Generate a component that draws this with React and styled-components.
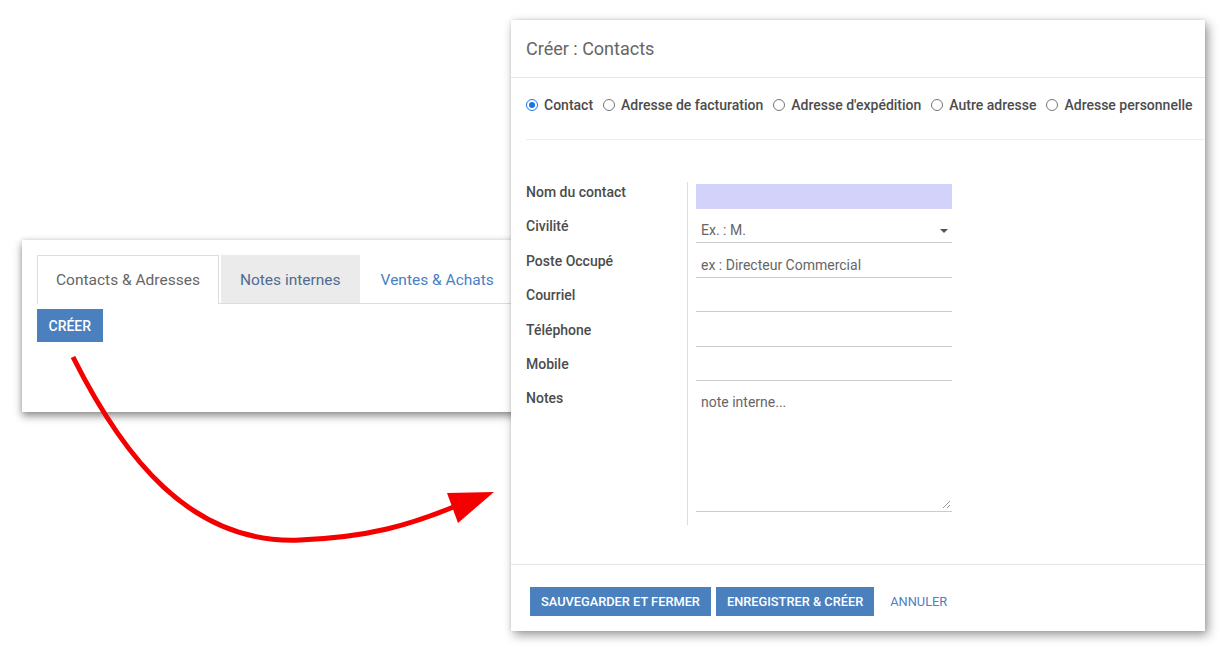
import React from 'react';
import styled, { createGlobalStyle } from 'styled-components';

const GlobalStyle = createGlobalStyle`
  html, body {
    margin: 0;
    padding: 0;
    background: #ffffff;
    font-family: Roboto, "Liberation Sans", Arial, sans-serif;
  }
`;

const blue = '#4a80be';
const labelColor = '#4c4c4c';

const Stage = styled.div`
  position: relative;
  width: 1226px;
  height: 658px;
  overflow: hidden;
  background: #fff;
`;

/* ---------- back window ---------- */

const BackWindow = styled.div`
  position: absolute;
  left: 22px;
  top: 240px;
  width: 600px;
  height: 172px;
  background: #fff;
  box-shadow: 0 4px 8px rgba(0, 0, 0, 0.45), 0 -1px 4px rgba(0, 0, 0, 0.08);
  padding: 15px 0 0 15px;
  box-sizing: border-box;
  z-index: 1;
`;

const TabBar = styled.div`
  display: flex;
  align-items: flex-end;
  height: 48px;
  border-bottom: 1px solid #dddddd;
`;

const Tab = styled.div`
  box-sizing: border-box;
  display: flex;
  align-items: center;
  padding: 0 18px;
  margin-right: 2px;
  font-size: 15.5px;
  color: ${(p) => (p.$active ? '#666666' : p.$muted ? '#4f6b91' : '#4a80c4')};
  background: ${(p) => (p.$active ? '#fff' : p.$muted ? '#ebebeb' : 'transparent')};
  border: 1px solid ${(p) => (p.$active ? '#dddddd' : 'transparent')};
  border-bottom: none;
  margin-bottom: ${(p) => (p.$active ? '-1px' : '0')};
  height: ${(p) => (p.$active ? '49px' : '48px')};
`;

const Button = styled.button`
  height: ${(p) => p.$h || 29}px;
  padding: 0 ${(p) => p.$px || 11}px;
  border: none;
  background: ${blue};
  color: #fff;
  font-family: Roboto, "Liberation Sans", Arial, sans-serif;
  font-size: ${(p) => p.$fs || 12.8}px;
  font-weight: 500;
  text-transform: uppercase;
  cursor: pointer;
`;

const CreateRow = styled.div`
  margin-top: 5px;
`;

/* ---------- modal ---------- */

const Modal = styled.div`
  position: absolute;
  left: 511px;
  top: 20px;
  width: 694px;
  height: 611px;
  background: #fff;
  box-shadow: 3px 4px 10px rgba(0, 0, 0, 0.4), 0 0 3px rgba(0, 0, 0, 0.12);
  display: flex;
  flex-direction: column;
  z-index: 3;
`;

const ModalHeader = styled.div`
  height: 58px;
  box-sizing: border-box;
  padding: 0 15px;
  display: flex;
  align-items: center;
  border-bottom: 1px solid #e6e6e6;
  font-size: 18px;
  color: #666666;
`;

const ModalBody = styled.div`
  flex: 1;
  padding-left: 15px;
`;

const RadioRow = styled.div`
  height: 62px;
  box-sizing: border-box;
  padding-top: 17px;
  display: flex;
  align-items: flex-start;
  border-bottom: 1px solid #eeeeee;
  gap: 10px;
`;

const RadioItem = styled.label`
  display: flex;
  align-items: center;
  gap: 6px;
  font-size: 14px;
  font-weight: 500;
  color: ${labelColor};
  line-height: 20px;
  white-space: nowrap;
`;

const RadioDot = styled.span`
  width: 12px;
  height: 12px;
  border-radius: 50%;
  box-sizing: border-box;
  border: 1px solid ${(p) => (p.$checked ? '#1a73e8' : '#767676')};
  display: flex;
  align-items: center;
  justify-content: center;
  &::after {
    content: '';
    width: 6px;
    height: 6px;
    border-radius: 50%;
    background: ${(p) => (p.$checked ? '#1a73e8' : 'transparent')};
  }
`;

const Form = styled.div`
  margin-top: 42px;
  display: grid;
  grid-template-columns: 161px 265px;
  grid-template-rows: repeat(6, 34.4px) auto;
`;

const Label = styled.div`
  font-size: 14px;
  font-weight: 500;
  color: ${labelColor};
  line-height: 20px;
`;

const Field = styled.div`
  border-left: 1px solid #dddddd;
  padding-left: 8px;
  padding-bottom: ${(p) => (p.$last ? 13 : 0)}px;
`;

const Input = styled.div`
  position: relative;
  margin-top: 2px;
  height: 25px;
  box-sizing: border-box;
  padding-left: 5px;
  display: flex;
  align-items: center;
  font-size: 14px;
  color: #666666;
  background: ${(p) => (p.$highlight ? '#d2d2fb' : 'transparent')};
  border-bottom: 1px solid ${(p) => (p.$highlight ? 'transparent' : '#cccccc')};
`;

const Caret = styled.span`
  position: absolute;
  right: 4px;
  top: 11px;
  width: 0;
  height: 0;
  border-left: 4px solid transparent;
  border-right: 4px solid transparent;
  border-top: 4px solid #555;
`;

const TextArea = styled.div`
  position: relative;
  height: 124px;
  box-sizing: border-box;
  padding: 6px 5px;
  font-size: 14px;
  color: #666666;
  border-bottom: 1px solid #cccccc;
`;

const Grip = styled.svg`
  position: absolute;
  right: 1px;
  bottom: 2px;
`;

const ModalFooter = styled.div`
  height: 67px;
  box-sizing: border-box;
  border-top: 1px solid #e6e6e6;
  padding: 22px 19px 0;
  display: flex;
  align-items: flex-start;
  gap: 5px;
`;

const LinkButton = styled.button`
  height: 29px;
  padding: 0 11px;
  border: none;
  background: transparent;
  color: #4a80c4;
  font-family: Roboto, "Liberation Sans", Arial, sans-serif;
  font-size: 12.8px;
  font-weight: 400;
  text-transform: uppercase;
  cursor: pointer;
`;

const ArrowLayer = styled.svg`
  position: absolute;
  left: 0;
  top: 0;
  z-index: 2;
  pointer-events: none;
`;

const radios = [
  'Contact',
  'Adresse de facturation',
  "Adresse d'expédition",
  'Autre adresse',
  'Adresse personnelle',
];

const fields = [
  { label: 'Nom du contact', highlight: true },
  { label: 'Civilité', value: 'Ex. : M.', select: true },
  { label: 'Poste Occupé', value: 'ex : Directeur Commercial' },
  { label: 'Courriel' },
  { label: 'Téléphone' },
  { label: 'Mobile' },
];

const App = () => {
  return (
    <Stage>
      <GlobalStyle />

      <BackWindow>
        <TabBar>
          <Tab $active>Contacts &amp; Adresses</Tab>
          <Tab $muted>Notes internes</Tab>
          <Tab>Ventes &amp; Achats</Tab>
        </TabBar>
        <CreateRow>
          <Button $h={33} $px={11.5} $fs={14}>Créer</Button>
        </CreateRow>
      </BackWindow>

      <ArrowLayer width="1226" height="658" viewBox="0 0 1226 658">
        <path
          d="M73 357 C 122 455, 190 545, 300 540 C 370 537, 410 525, 456 506"
          fill="none"
          stroke="#f40000"
          strokeWidth="5"
        />
        <polygon points="494,492 447,493 458,523" fill="#f40000" />
      </ArrowLayer>

      <Modal>
        <ModalHeader>Créer : Contacts</ModalHeader>
        <ModalBody>
          <RadioRow>
            {radios.map((r, i) => (
              <RadioItem key={r}>
                <RadioDot $checked={i === 0} />
                {r}
              </RadioItem>
            ))}
          </RadioRow>

          <Form>
            {fields.map((f) => (
              <React.Fragment key={f.label}>
                <Label>{f.label}</Label>
                <Field>
                  <Input $highlight={f.highlight}>
                    {f.value}
                    {f.select && <Caret />}
                  </Input>
                </Field>
              </React.Fragment>
            ))}
            <Label>Notes</Label>
            <Field $last>
              <TextArea>
                note interne...
                <Grip width="9" height="9" viewBox="0 0 9 9">
                  <path d="M8 1 L1 8 M8 5 L5 8" stroke="#999" strokeWidth="1" />
                </Grip>
              </TextArea>
            </Field>
          </Form>
        </ModalBody>
        <ModalFooter>
          <Button>Sauvegarder et fermer</Button>
          <Button>Enregistrer &amp; créer</Button>
          <LinkButton>Annuler</LinkButton>
        </ModalFooter>
      </Modal>
    </Stage>
  );
};

export default App;
